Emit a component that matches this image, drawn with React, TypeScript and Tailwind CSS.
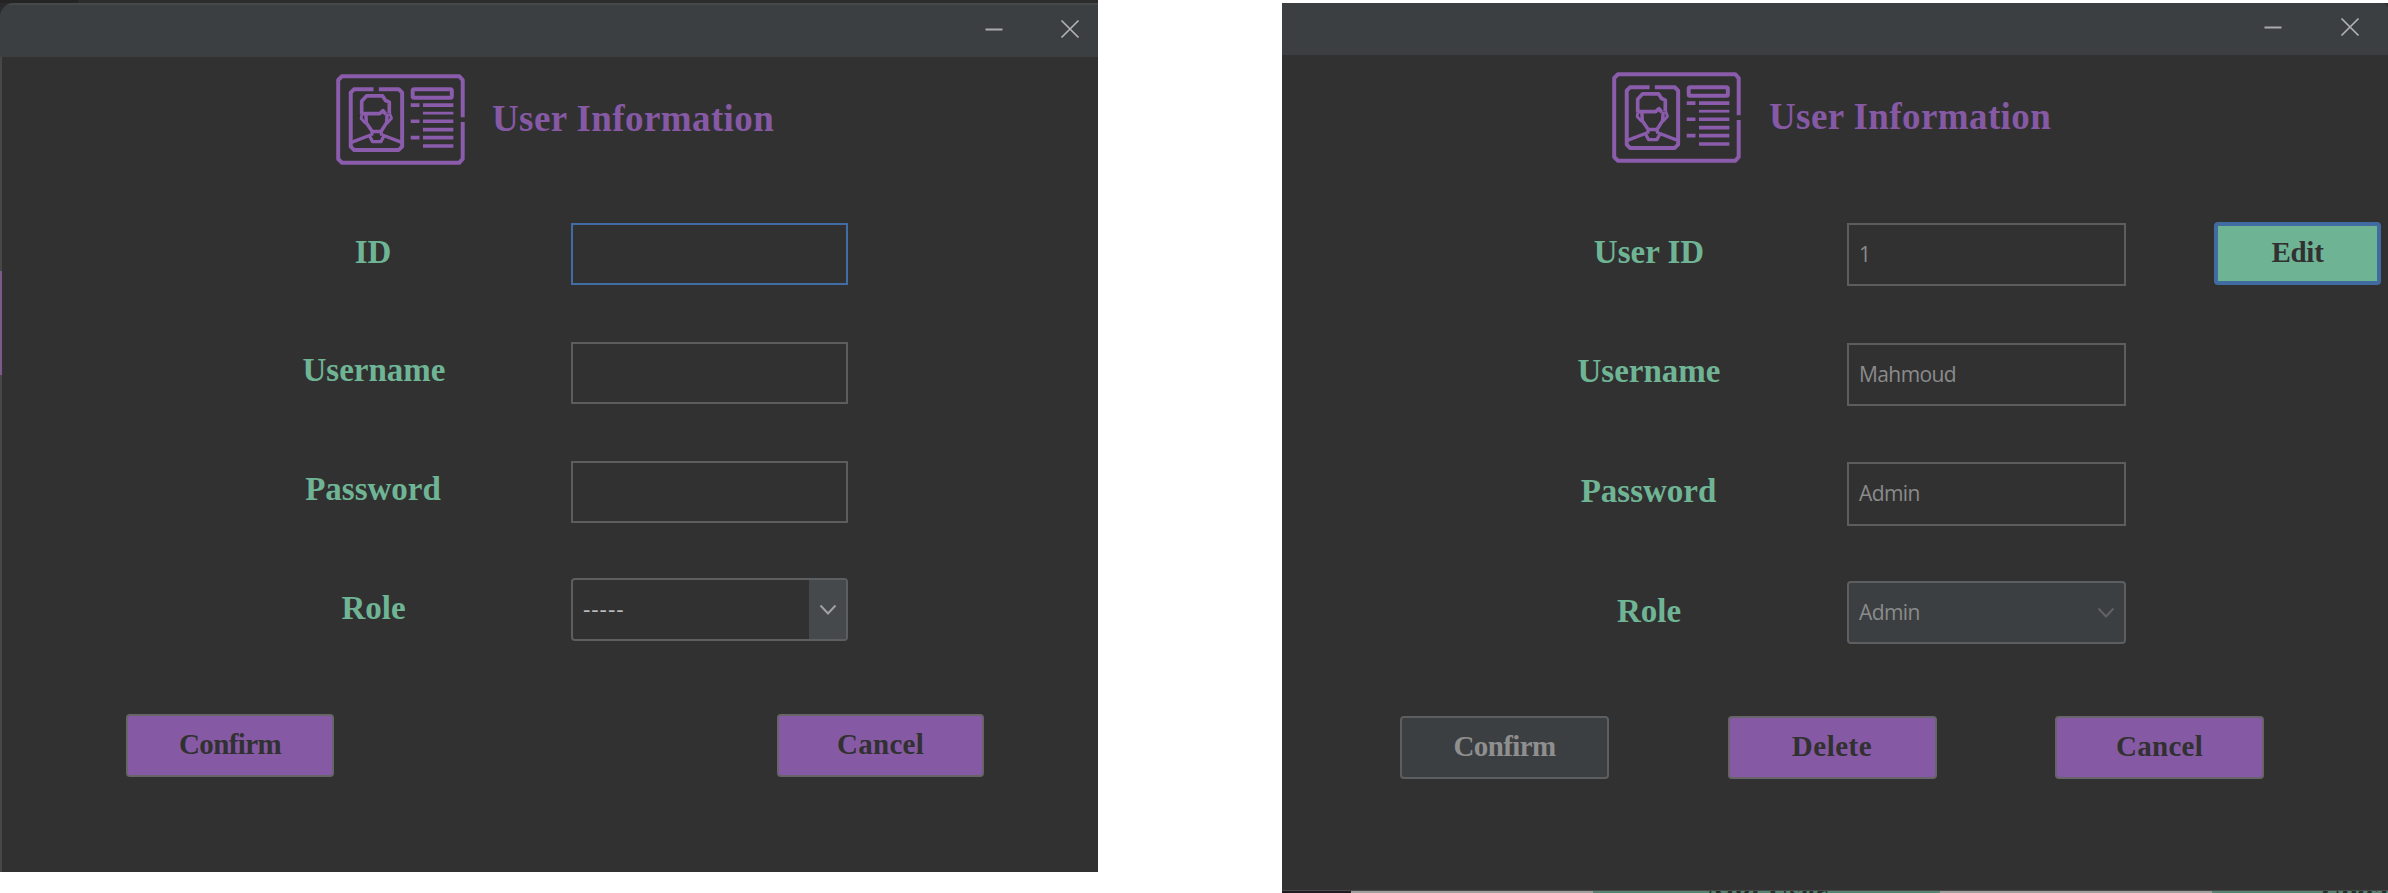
import React from "react";

const serif = "font-['Liberation_Serif',serif] font-bold whitespace-nowrap";
const sans = "font-['Open_Sans',sans-serif] whitespace-nowrap";

function IdCardIcon() {
  return (
    <svg
      className="block h-[91px] w-[129px] shrink-0"
      viewBox="0 0 129.5 90.5"
      preserveAspectRatio="none"
      fill="none"
      stroke="#8a5cab"
      strokeWidth="4"
      strokeLinejoin="round"
    >
      <path d="M127.2 43V6l-3.5-3.8H6L2.2 6v78.5L6 88.3h117.7l3.5-3.8V47.7" />
      <path d="M37.7 15.2H18l-3.2 3.3v53.7l3.2 3.3h45l3.4-3.3V18.5L63 15.2H43" />
      <path
        strokeWidth="3.7"
        d="M25.8 40V27l4.8-5.2h16.2l3 4.6 3.7 1.6v11M25.8 39.4h18l3.4-2.8 2.8 3.4"
      />
      <path strokeWidth="3.5" d="M30 40l.4 8.4 6 8.8h8.8l5.6-8.8.6-9" />
      <path strokeWidth="2.8" d="M26 40l-.8 4.2 4.6 5M53.8 39l2 5-5 5.4" />
      <path strokeWidth="3.3" d="M36.6 57l-1 4.2M45 57l1 4.2M33.6 61.4l3 5.8h8.6l3-5.8" />
      <path strokeWidth="3.3" d="M15.4 68l19.4-7.4M46.6 60.6L66 68" />
      <rect x="77" y="15.2" width="39.3" height="8.4" rx="1.5" />
      <g strokeWidth="3.6">
        <path d="M75 31h8.8M75 47h8.8M75 63.3h8.8" />
        <path d="M87.3 31h30.5M87.3 47h30.5M87.3 55.3h30.5M87.3 63.3h30.5M87.3 71.6h30.5" />
        <path strokeWidth="2.8" d="M87.3 39h30.5" />
      </g>
    </svg>
  );
}

function Minimize() {
  return (
    <svg className="block h-5 w-5" viewBox="0 0 20 20" stroke="#a9abac" strokeWidth="2">
      <path d="M1.5 10.5h17" />
    </svg>
  );
}

function Close() {
  return (
    <svg className="block h-5 w-5" viewBox="0 0 20 20" stroke="#b0b2b3" strokeWidth="1.7">
      <path d="M1.5 1.5l17 17M18.5 1.5l-17 17" />
    </svg>
  );
}

function Chevron({ color }: { color: string }) {
  return (
    <svg className="block h-[12px] w-[18px]" viewBox="0 0 18 12" fill="none" stroke={color} strokeWidth="2">
      <path d="M1.5 1.5l7.5 8 7.5-8" />
    </svg>
  );
}

function Heading({ gap }: { gap: string }) {
  return (
    <div className={"flex h-[91px] items-center " + gap}>
      <IdCardIcon />
      <h1 className={serif + " pb-[1px] text-[37px] leading-[42px] tracking-[0.4px] text-[#8659a5]"}>
        User Information
      </h1>
    </div>
  );
}

function Row({
  label,
  lift,
  height,
  children,
}: {
  label: string;
  lift: string;
  height: string;
  children: React.ReactNode;
}) {
  return (
    <div className={"flex " + height}>
      <div
        className={
          serif + " flex w-[394px] shrink-0 items-center justify-center text-[33px] leading-[36px] text-[#6fb595] " + lift
        }
      >
        {label}
      </div>
      {children}
    </div>
  );
}

function Field({ value = "", style }: { value?: string; style: string }) {
  return (
    <div
      className={
        sans + " flex shrink-0 items-center pl-[10px] text-[21px] tracking-[-0.6px] text-[#8a8b8c] " + style
      }
    >
      {value}
    </div>
  );
}

function Button({ text, style }: { text: string; style: string }) {
  return (
    <div className={serif + " flex shrink-0 items-center justify-center rounded-[4px] text-[29px] " + style}>
      {text}
    </div>
  );
}

const plain = "w-[277px] border-2 border-[#5c5d5e]";
const plainWide = "w-[279px] border-2 border-[#5c5d5e]";
const primary = "h-[63px] border-2 border-[#67656a] bg-[#8659a5] pb-[2px] text-[#313131]";

function AddUserWindow() {
  return (
    <section className="flex h-[872px] w-[1098px] flex-col bg-[#2a2a2a]">
      <div className="flex h-[3px]">
        <div className="w-[78px] bg-[#242424]" />
        <div className="flex-1 bg-[#2c2c2c]" />
      </div>
      <div className="flex h-[869px] flex-col overflow-hidden rounded-tl-[14px] bg-[#313131]">
        <header className="flex h-[54px] items-start justify-end gap-[56px] border-t-2 border-[#454947] bg-[#3c3f41] pt-[14px] pr-[18px]">
          <Minimize />
          <Close />
        </header>
        <div className="flex flex-1">
          <div className="flex w-[2px] flex-col bg-[#474747] pt-[214px]">
            <div className="h-[104px] bg-[#7e5a8a]" />
          </div>
          <div className="flex flex-col pt-[17px]">
            <div className="pl-[334px]">
              <Heading gap="gap-[27px]" />
            </div>
            <div className="flex flex-col pt-[58px] pl-[175px]">
              <Row label="ID" lift="pb-[4px] pr-[2px]" height="h-[62px]">
                <Field style="w-[277px] border-2 border-[#406da3]" />
              </Row>
              <div className="h-[57px]" />
              <Row label="Username" lift="pb-[7px]" height="h-[62px]">
                <Field style={plain} />
              </Row>
              <div className="h-[57px]" />
              <Row label="Password" lift="pb-[7px] pr-[2px]" height="h-[62px]">
                <Field style={plain} />
              </Row>
              <div className="h-[55px]" />
              <Row label="Role" lift="pb-[4px] pr-[1px]" height="h-[63px]">
                <div className="flex w-[277px] overflow-hidden rounded-[4px] border-2 border-[#5c5e60]">
                  <div className={sans + " flex flex-1 items-center pl-[10px] text-[23px] tracking-[0.9px] text-[#bbbbbb]"}>
                    -----
                  </div>
                  <div className="flex w-[37px] items-center justify-center bg-[#46494b]">
                    <Chevron color="#9fa1a2" />
                  </div>
                </div>
              </Row>
            </div>
            <div className="flex w-[982px] justify-between pt-[73px] pl-[124px]">
              <Button text="Confirm" style={primary + " w-[208px] tracking-[-0.6px]"} />
              <Button text="Cancel" style={primary + " w-[207px] tracking-[0.3px]"} />
            </div>
          </div>
        </div>
      </div>
    </section>
  );
}

function EditUserWindow() {
  return (
    <section className="flex h-[893px] w-[1106px] flex-col overflow-hidden pt-[3px]">
      <div className="flex h-[887px] shrink-0 flex-col bg-[#313131]">
        <header className="flex h-[52px] items-start justify-end gap-[57px] rounded-tr-[6px] bg-[#3c3f41] pt-[14px] pr-[28px]">
          <Minimize />
          <Close />
        </header>
        <div className="pt-[17px] pl-[330px]">
          <Heading gap="gap-[28px]" />
        </div>
        <div className="flex flex-col pt-[60px] pl-[171px]">
          <Row label="User ID" lift="pb-[5px] pr-[2px]" height="h-[63px]">
            <Field value="1" style={plainWide} />
            <Button
              text="Edit"
              style="-mt-[1px] ml-[88px] h-[63px] w-[167px] border-4 border-[#406ca1] bg-[#6fb395] pb-[2px] tracking-[-0.3px] text-[#313131]"
            />
          </Row>
          <div className="h-[57px]" />
          <Row label="Username" lift="pb-[7px] pr-[2px]" height="h-[63px]">
            <Field value="Mahmoud" style={plainWide} />
          </Row>
          <div className="h-[56px]" />
          <Row label="Password" lift="pb-[7px] pr-[3px]" height="h-[64px]">
            <Field value="Admin" style={plainWide} />
          </Row>
          <div className="h-[55px]" />
          <Row label="Role" lift="pb-[4px] pr-[2px]" height="h-[63px]">
            <div className="flex w-[279px] items-center justify-between rounded-[4px] border-2 border-[#5c5e60] bg-[#3c3f41] pr-[9px] pl-[10px]">
              <span className={sans + " text-[21px] tracking-[-0.6px] text-[#8a8b8c]"}>Admin</span>
              <Chevron color="#606264" />
            </div>
          </Row>
        </div>
        <div className="flex w-[982px] justify-between pt-[72px] pl-[118px]">
          <Button
            text="Confirm"
            style="h-[63px] w-[209px] border-2 border-[#5c5e60] bg-[#3c3f41] pb-[2px] tracking-[-0.6px] text-[#8f8f8f]"
          />
          <Button text="Delete" style={primary + " w-[209px] tracking-[0.5px]"} />
          <Button text="Cancel" style={primary + " w-[209px] tracking-[0.3px]"} />
        </div>
      </div>
      <div className="flex h-[3px] overflow-hidden border-t border-[#4a4a4a] bg-[#221c22]">
        <div className="w-[69px]" />
        <div className="w-[242px] bg-[#a19e9e]" />
        <div className="flex w-[347px] items-center justify-center bg-[#568470]">
          <span className={serif + " text-[29px] leading-[10px] tracking-[0.7px] text-[#242d29]"}>Add User</span>
        </div>
        <div className="w-[272px] bg-[#a19e9e]" />
        <div className="flex w-[176px] items-center justify-end overflow-hidden bg-[#568470]">
          <span className={serif + " text-[29px] leading-[10px] text-[#242d29]"}>Upda</span>
        </div>
      </div>
    </section>
  );
}

export default function App() {
  return (
    <main className="flex h-[893px] w-[2388px] items-start justify-between overflow-hidden bg-white">
      <AddUserWindow />
      <EditUserWindow />
    </main>
  );
}
